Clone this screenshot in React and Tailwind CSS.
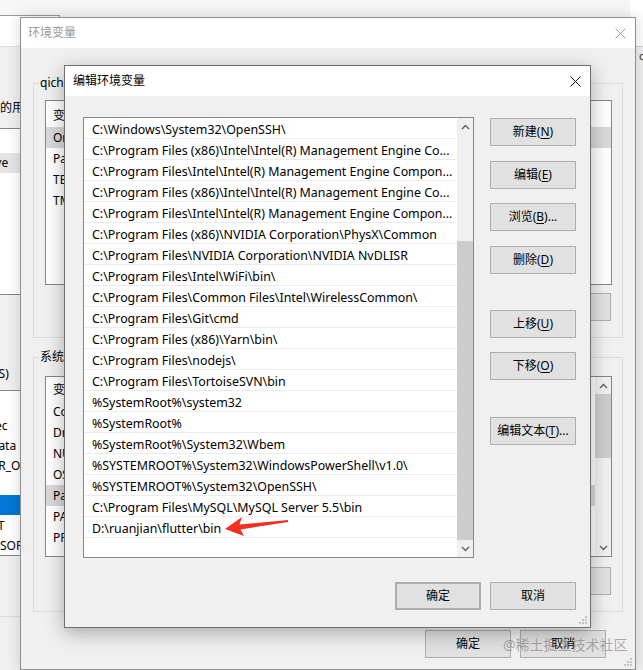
import React from 'react';

const paths = [
  'C:\\Windows\\System32\\OpenSSH\\',
  'C:\\Program Files (x86)\\Intel\\Intel(R) Management Engine Co...',
  'C:\\Program Files\\Intel\\Intel(R) Management Engine Compon...',
  'C:\\Program Files (x86)\\Intel\\Intel(R) Management Engine Co...',
  'C:\\Program Files\\Intel\\Intel(R) Management Engine Compon...',
  'C:\\Program Files (x86)\\NVIDIA Corporation\\PhysX\\Common',
  'C:\\Program Files\\NVIDIA Corporation\\NVIDIA NvDLISR',
  'C:\\Program Files\\Intel\\WiFi\\bin\\',
  'C:\\Program Files\\Common Files\\Intel\\WirelessCommon\\',
  'C:\\Program Files\\Git\\cmd',
  'C:\\Program Files (x86)\\Yarn\\bin\\',
  'C:\\Program Files\\nodejs\\',
  'C:\\Program Files\\TortoiseSVN\\bin',
  '%SystemRoot%\\system32',
  '%SystemRoot%',
  '%SystemRoot%\\System32\\Wbem',
  '%SYSTEMROOT%\\System32\\WindowsPowerShell\\v1.0\\',
  '%SYSTEMROOT%\\System32\\OpenSSH\\',
  'C:\\Program Files\\MySQL\\MySQL Server 5.5\\bin',
  'D:\\ruanjian\\flutter\\bin',
  '',
];

const userVars = [
  ['OneDrive', 'C:\\Users\\qichen\\OneDrive'],
  ['Path', 'C:\\Users\\qichen\\AppData'],
  ['TEMP', '%USERPROFILE%\\AppData'],
  ['TMP', '%USERPROFILE%\\AppData'],
];

const sysVars = [
  ['ComSpec', 'C:\\Windows\\system32\\cmd.exe'],
  ['DriverData', 'C:\\Windows\\System32\\Drivers'],
  ['NUMBER_OF_PROCESSORS', '8'],
  ['OS', 'Windows_NT'],
  ['Path', 'C:\\Windows\\System32\\OpenSSH'],
  ['PATHEXT', '.COM;.EXE;.BAT;.CMD'],
  ['PROCESSOR_ARCHITECTURE', 'AMD64'],
];

const Chevron = ({ up = false }) => (
  <svg width="9" height="6" viewBox="0 0 9 6" className="text-[#606060]">
    <polyline
      points={up ? '1,5 4.5,1.5 8,5' : '1,1 4.5,4.5 8,1'}
      fill="none"
      stroke="currentColor"
      strokeWidth="1.4"
    />
  </svg>
);

const CloseX = ({ className = '' }) => (
  <svg width="11" height="11" viewBox="0 0 11 11" className={className}>
    <path d="M0.5 0.5 L10.5 10.5 M10.5 0.5 L0.5 10.5" stroke="currentColor" strokeWidth="1" />
  </svg>
);

const Grip = ({ className = '' }) => (
  <svg width="8" height="8" viewBox="0 0 8 8" className={className}>
    {[[6, 0], [3, 3], [6, 3], [0, 6], [3, 6], [6, 6]].map(([x, y]) => (
      <rect key={`${x}-${y}`} x={x} y={y} width="2" height="2" fill="#c4c4c4" />
    ))}
  </svg>
);

const Btn = ({ children, className = '' }) => (
  <div
    className={`flex h-[28px] w-[86px] shrink-0 items-center justify-center border border-[#adadad] bg-[#e1e1e1] text-[12px] ${className}`}
  >
    {children}
  </div>
);

const Key = ({ children }) => <span className="underline underline-offset-[2px]">{children}</span>;

const ScrollBar = ({ thumb }) => (
  <div className="flex w-[16px] shrink-0 flex-col bg-[#f0f0f0]">
    <div className="flex h-[17px] items-center justify-center">
      <Chevron up />
    </div>
    <div className="flex flex-1 flex-col">
      <div className={`bg-[#cdcdcd] ${thumb}`} />
    </div>
    <div className="flex h-[17px] items-center justify-center">
      <Chevron />
    </div>
  </div>
);

// far-left window, only its right edge peeks out
const LeftWindow = () => (
  <div className="absolute left-[-100px] top-[15px] h-[670px] w-[160px] overflow-hidden border border-[#9a9a9a] bg-[#f0f0f0]">
    <div className="h-[31px] border-b border-[#e0e0e0] bg-white" />
    <div className="ml-[58px] mt-[53px] whitespace-nowrap leading-[16px]">qichen 的用户变量(U)</div>
    <div className="ml-[44px] mt-[12px] h-[167px] w-[300px] border border-[#828790] bg-white">
      <div className="flex h-[24px] items-center pl-[9px]">变量</div>
      {userVars.map(([name], i) => (
        <div
          key={name}
          className={`flex h-[20px] items-center whitespace-nowrap pl-[9px] ${i === 0 ? 'bg-[#e5e5e5]' : ''}`}
        >
          {name}
        </div>
      ))}
    </div>
    <div className="ml-[46px] mt-[71px] whitespace-nowrap leading-[16px]">系统变量(S)</div>
    <div className="ml-[44px] mt-[8px] h-[166px] w-[300px] border border-[#828790] bg-white">
      <div className="flex h-[24px] items-center pl-[9px]">变量</div>
      {sysVars.map(([name]) => (
        <div
          key={name}
          className={`flex h-[20px] items-center whitespace-nowrap pl-[9px] pt-[2px] ${name === 'Path' ? 'bg-[#0078d7] text-white' : ''}`}
        >
          {name}
        </div>
      ))}
    </div>
    <div className="mt-[60px] h-px w-full bg-[#dcdcdc]" />
  </div>
);

// sliver of another window at the right edge
const RightWindow = () => (
  <div className="absolute left-[630px] top-0 flex h-[670px] w-[30px] flex-col bg-[#f0f0f0]">
    <div className="h-[47px] border-b border-[#d6d6d6] bg-white" />
    <div className="ml-[9px] mt-[2px] text-[11px] leading-[14px] text-[#333]">c</div>
  </div>
);

const VarList = ({ vars, headerClass, selected, className, scroll }) => (
  <div className={`flex border border-[#828790] bg-white ${className}`}>
    <div className="flex-1 overflow-hidden">
      <div className={`flex items-center whitespace-nowrap pl-[7px] leading-[16px] ${headerClass}`}>
        <span className="w-[160px]">变量</span>
        <span>值</span>
      </div>
      {vars.map(([name, value]) => (
        <div
          key={name}
          className={`flex h-[21px] whitespace-nowrap pl-[7px] pt-[3px] leading-[16px] ${name === selected ? 'bg-[#d9d9d9]' : ''}`}
        >
          <span className="w-[160px] overflow-hidden">{name}</span>
          <span>{value}</span>
        </div>
      ))}
    </div>
    {scroll}
  </div>
);

const MainWindow = () => (
  <div className="absolute left-[20px] top-[17px] flex h-[653px] w-[616px] flex-col border border-[#8f8f8f] bg-[#f0f0f0] shadow-[0_0_14px_rgba(0,0,0,0.16)]">
    <div className="flex h-[30px] shrink-0 items-center justify-between bg-white pl-[7px] pr-[9px] text-[#9a9a9a]">
      <span>环境变量</span>
      <CloseX />
    </div>

    <fieldset className="mx-[12px] mt-[27px] border border-[#dcdcdc] pb-[16px]">
      <legend className="ml-[5px] px-[1px] leading-[16px]">qichen 的用户变量(U)</legend>
      <VarList
        vars={userVars}
        headerClass="h-[26px] pt-[3px]"
        selected="OneDrive"
        className="ml-[11px] mr-[10px] mt-[9px] h-[185px]"
      />
      <div className="mr-[11px] mt-[8px] flex justify-end gap-[10px]">
        <Btn>
          新建(<Key>N</Key>)...
        </Btn>
        <Btn>
          编辑(<Key>I</Key>)...
        </Btn>
        <Btn>
          删除(<Key>D</Key>)
        </Btn>
      </div>
    </fieldset>

    <fieldset className="mx-[12px] mt-[11px] border border-[#dcdcdc] pb-[16px]">
      <legend className="ml-[5px] px-[1px] leading-[16px]">系统变量(S)</legend>
      <VarList
        vars={sysVars}
        headerClass="h-[24px] pt-[2px]"
        selected="Path"
        className="ml-[11px] mr-[10px] mt-[11px] h-[181px]"
        scroll={<ScrollBar thumb="h-[64px]" />}
      />
      <div className="mr-[11px] mt-[10px] flex justify-end gap-[10px]">
        <Btn>
          新建(<Key>W</Key>)...
        </Btn>
        <Btn>
          编辑(<Key>I</Key>)...
        </Btn>
        <Btn>
          删除(<Key>L</Key>)
        </Btn>
      </div>
    </fieldset>

    <div className="mt-[18px] flex justify-end gap-[9px] pr-[29px]">
      <Btn>确定</Btn>
      <Btn>取消</Btn>
    </div>

    <Grip className="absolute bottom-[3px] right-[3px]" />
  </div>
);

const EditDialog = () => (
  <div className="absolute left-[64px] top-[65px] flex h-[563px] w-[527px] flex-col border border-[#6f6f6f] bg-[#f0f0f0] shadow-[0_5px_18px_rgba(0,0,0,0.3)]">
    <div className="flex h-[30px] shrink-0 items-center justify-between bg-white pl-[8px] pr-[9px]">
      <span>编辑环境变量</span>
      <CloseX className="text-[#111]" />
    </div>

    <div className="flex flex-1 flex-col pl-[18px] pr-[14px] pt-[21px]">
      <div className="flex">
        <div className="flex h-[441px] w-[391px] border border-[#828790] bg-white">
          <div className="flex-1 overflow-hidden text-[12.4px]">
            {paths.map((p, i) => (
              <div
                key={i}
                className="h-[21px] overflow-hidden whitespace-nowrap border-b border-[#ececec] pl-[8px] pt-[4px] leading-[16px]"
              >
                {p}
              </div>
            ))}
          </div>
          <ScrollBar thumb="mt-auto h-[299px]" />
        </div>

        <div className="ml-[16px] flex flex-col pt-[1px]">
          <Btn>
            新建(<Key>N</Key>)
          </Btn>
          <Btn className="mt-[15px]">
            编辑(<Key>E</Key>)
          </Btn>
          <Btn className="mt-[14px]">
            浏览(<Key>B</Key>)...
          </Btn>
          <Btn className="mt-[15px]">
            删除(<Key>D</Key>)
          </Btn>
          <Btn className="mt-[36px]">
            上移(<Key>U</Key>)
          </Btn>
          <Btn className="mt-[14px]">
            下移(<Key>O</Key>)
          </Btn>
          <Btn className="mt-[37px]">
            编辑文本(<Key>T</Key>)...
          </Btn>
        </div>
      </div>

      <div className="mt-[24px] flex justify-end gap-[9px]">
        <Btn className="border-2 border-[#0078d7]">确定</Btn>
        <Btn>取消</Btn>
      </div>
    </div>

    <Grip className="absolute bottom-[3px] right-[3px]" />
  </div>
);

const RedArrow = () => (
  <svg className="pointer-events-none absolute left-0 top-0" width="643" height="670" viewBox="0 0 643 670">
    <path
      d="M225 529 L242 517 L239.5 524.5 L288 520 L288 522 L240.5 529.5 L244 536 Z"
      fill="#f2301f"
    />
  </svg>
);

export default function App() {
  return (
    <div className="relative h-[670px] w-[643px] overflow-hidden bg-[#f6f6f6] font-['Noto_Sans','Noto_Sans_CJK_SC',sans-serif] text-[12px] text-black">
      <LeftWindow />
      <RightWindow />
      <MainWindow />
      <EditDialog />
      <RedArrow />
      <div className="pointer-events-none absolute left-[503px] top-[636px] whitespace-nowrap text-[14px] leading-[18px] text-[rgba(110,110,110,0.55)]">
        @稀土掘金技术社区
      </div>
    </div>
  );
}
